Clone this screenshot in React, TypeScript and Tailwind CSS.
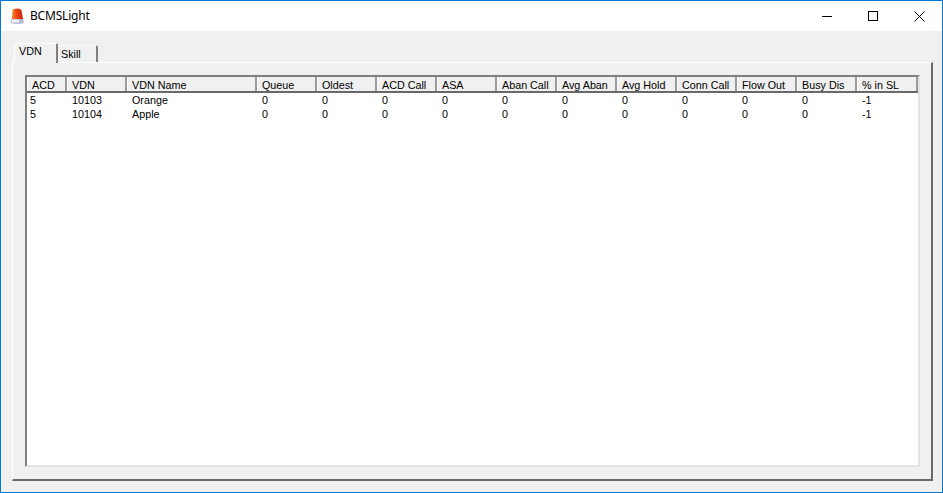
const cols = [
  { label: 'ACD', w: 'w-[40px]' },
  { label: 'VDN', w: 'w-[60px]' },
  { label: 'VDN Name', w: 'w-[130px]' },
  { label: 'Queue', w: 'w-[60px]' },
  { label: 'Oldest', w: 'w-[60px]' },
  { label: 'ACD Call', w: 'w-[60px]' },
  { label: 'ASA', w: 'w-[60px]' },
  { label: 'Aban Call', w: 'w-[60px]' },
  { label: 'Avg Aban', w: 'w-[60px]' },
  { label: 'Avg Hold', w: 'w-[60px]' },
  { label: 'Conn Call', w: 'w-[60px]' },
  { label: 'Flow Out', w: 'w-[60px]' },
  { label: 'Busy Dis', w: 'w-[60px]' },
  { label: '% in SL', w: 'w-[61px]' },
];

const rows = [
  ['5', '10103', 'Orange', '0', '0', '0', '0', '0', '0', '0', '0', '0', '0', '-1'],
  ['5', '10104', 'Apple', '0', '0', '0', '0', '0', '0', '0', '0', '0', '0', '-1'],
];

function AlarmIcon() {
  return (
    <svg width="15" height="17" viewBox="0 0 15 17">
      <defs>
        <linearGradient id="dome" x1="0" y1="0" x2="1" y2="0">
          <stop offset="0" stopColor="#f58a30" />
          <stop offset="0.45" stopColor="#ee4410" />
          <stop offset="1" stopColor="#c42408" />
        </linearGradient>
      </defs>
      <path d="M1.8 11 L2.6 2.5 Q3 0.5 7 0.5 Q11 0.5 11.5 2.5 L13 11 Z" fill="url(#dome)" />
      <path d="M1.5 11 H13 L14 15 Q7.5 17 0.5 15 Z" fill="#b4bad8" />
      <path d="M2 11.5 H9 V14.5 H2 Z" fill="#eef0fa" />
    </svg>
  );
}

export default function App() {
  return (
    <div className="w-[943px] h-[493px] flex flex-col border border-[#0078d7] bg-[#f0f0f0] text-[10.75px] leading-[14px] text-black overflow-hidden font-['Liberation_Sans',sans-serif]">
      {/* title bar */}
      <div className="h-[30px] bg-white flex items-center shrink-0">
        <div className="ml-[9px] w-[15px] flex"><AlarmIcon /></div>
        <span className="ml-[5px] text-[12px] tracking-[-0.2px] font-['Noto_Sans',sans-serif]">BCMSLight</span>
        <div className="ml-auto flex items-center">
          <div className="w-[46px] h-[30px] flex items-center justify-center">
            <svg width="10" height="10" viewBox="0 0 10 10"><path d="M0 5.5 H10" stroke="#000" strokeWidth="1" /></svg>
          </div>
          <div className="w-[46px] h-[30px] flex items-center justify-center">
            <svg width="10" height="10" viewBox="0 0 10 10"><rect x="0.5" y="0.5" width="9" height="9" fill="none" stroke="#000" strokeWidth="1" /></svg>
          </div>
          <div className="w-[46px] h-[30px] flex items-center justify-center">
            <svg width="11" height="11" viewBox="0 0 11 11"><path d="M0.5 0.5 L10.5 10.5 M10.5 0.5 L0.5 10.5" stroke="#000" strokeWidth="1" /></svg>
          </div>
        </div>
      </div>

      <div className="flex-1 flex flex-col pl-[11px] pr-[9px] pt-[12px] pb-[11px] min-h-0">
        {/* tabs */}
        <div className="flex items-end h-[19px] shrink-0 pl-[2px]">
          <div className="relative z-10 w-[44px] h-[20px] -mb-[1px] bg-[#f0f0f0] border-t border-l border-white rounded-t-[2px] border-r-2 border-r-[#808080] pl-[4px]">VDN</div>
          <div className="w-[40px] h-[17px] border-t border-[#f8f8f8] border-r-2 border-r-[#808080] rounded-tr-[2px] pl-[3px] pt-[1px]">Skill</div>
        </div>
        {/* page */}
        <div className="flex-1 min-h-0 border-t border-l border-white border-r-2 border-r-[#696969] border-b-2 border-b-[#696969] pl-[12px] pr-[11px] pt-[12px] pb-[12px]">
          {/* list */}
          <div className="h-full bg-white border-t-2 border-l-2 border-[#7f7f7f] border-r-2 border-r-[#e3e3e3] border-b-2 border-b-[#e3e3e3] overflow-hidden">
            <div className="flex h-[16px] bg-[#f0f0f0] border-b-2 border-b-[#696969]">
              {cols.map((c) => (
                <div key={c.label} className={`${c.w} shrink-0 border-l border-l-white border-r-2 border-r-[#9a9a9a] pl-[4px] pt-[1px] whitespace-nowrap`}>
                  {c.label}
                </div>
              ))}
            </div>
            <div>
              {rows.map((r) => (
                <div key={r[1]} className="flex h-[14px]">
                  {r.map((v, i) => (
                    <div key={i} className={`${cols[i].w} shrink-0 pl-[5px] first:pl-[3px] whitespace-nowrap`}>{v}</div>
                  ))}
                </div>
              ))}
            </div>
          </div>
        </div>
      </div>
    </div>
  );
}
